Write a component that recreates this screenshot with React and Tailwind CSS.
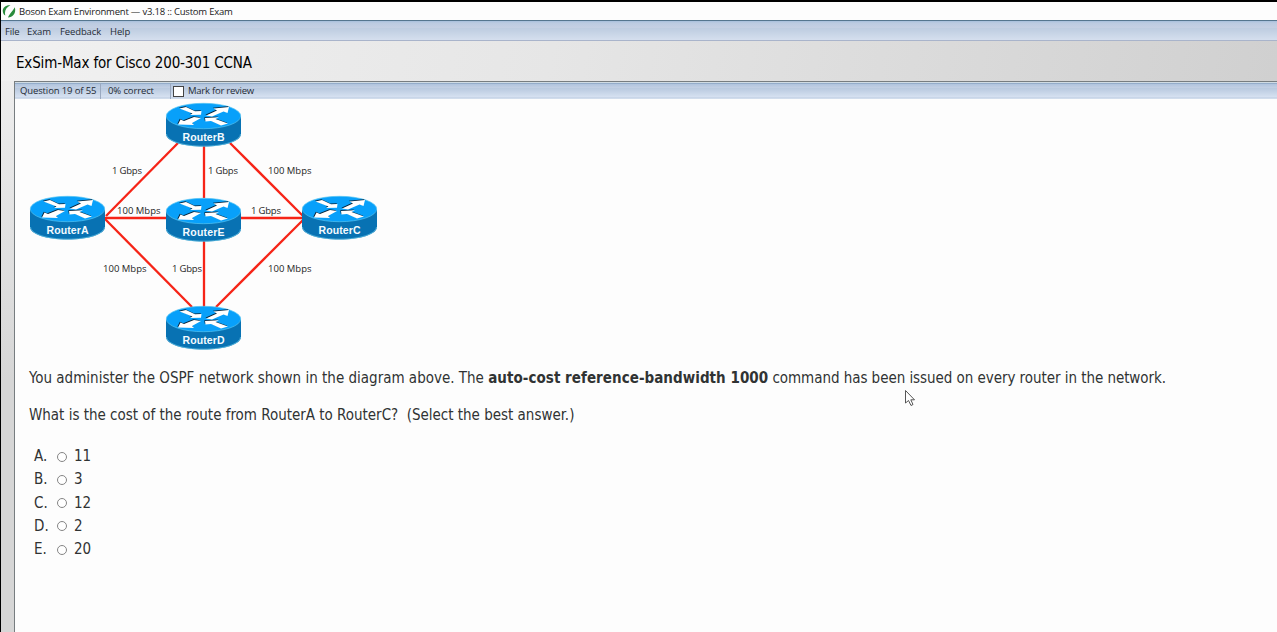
import React from "react";

const tahoma = "font-['DejaVu_Sans_Condensed','DejaVu_Sans',sans-serif] [font-stretch:condensed]";
const segoe = "font-['Open_Sans',sans-serif] [font-stretch:normal]";

const routers = [
  { name: "RouterB", x: 166, y: 103 },
  { name: "RouterA", x: 30, y: 196 },
  { name: "RouterE", x: 166, y: 198 },
  { name: "RouterC", x: 302, y: 196 },
  { name: "RouterD", x: 166, y: 306 },
];

const links = [
  [106, 216, 178, 143],
  [204, 146, 204, 198],
  [230, 143, 303, 216],
  [104, 218, 167, 218],
  [240, 218, 303, 218],
  [105, 219, 192, 307],
  [204, 240, 204, 307],
  [303, 220, 216, 307],
];

const speeds = [
  [112, 173.5, "1 Gbps", 30],
  [208, 173.5, "1 Gbps", 30],
  [268, 173.5, "100 Mbps", 43.5],
  [117, 214, "100 Mbps", 43.5],
  [251, 214, "1 Gbps", 30],
  [103, 271.5, "100 Mbps", 43.5],
  [172, 271.5, "1 Gbps", 30],
  [268, 271.5, "100 Mbps", 43.5],
];

function Arrows() {
  return (
    <>
      <path d="M13.5 5.5L20 4L29 8.2L35.5 8L35 11.8L24 12L26.5 10.5Z" />
      <path d="M40 12.5L51 7.5L47.5 5.5L63 4L61.5 10L57.5 8.5L46 13.5Z" />
      <path d="M35 15L26 20L28 22L12 21.5L14.5 16.5L18 18L28 14Z" />
      <path d="M39 15L53 14.2L49.5 16L62 20.5L55 22.5L45 18L39.5 18.5Z" />
    </>
  );
}

function Router({ name, x, y }) {
  return (
    <g transform={`translate(${x} ${y})`}>
      <path d="M0 13.5V31C0 38 16 43.5 37.5 43.5S75 38 75 31V13.5Z" fill="#0872b3" />
      <path d="M.5 31C1 38 17 43.2 37.5 43.2S74 38 74.5 31" fill="none" stroke="#67c6e6" strokeWidth=".7" />
      <ellipse cx="37.5" cy="13" rx="37.2" ry="12.7" fill="#08a0fa" stroke="#55c4f2" strokeWidth=".7" />
      <g fill="#06243b" transform="translate(-.7 -.7)"><Arrows /></g>
      <g fill="#fff"><Arrows /></g>
      <text x="37.5" y="37.5" textAnchor="middle" textLength="42" fill="#f4fbff" className="font-['Liberation_Sans',sans-serif] text-[10.5px] font-bold [font-stretch:normal]">{name}</text>
    </g>
  );
}

function Diagram() {
  return (
    <svg className="block h-[254px] w-[363px] shrink-0" viewBox="15 99 363 254" role="img" aria-label="OSPF network">
      <g stroke="#f62417" strokeWidth="2.3">
        {links.map(([x1, y1, x2, y2], i) => <line key={i} x1={x1} y1={y1} x2={x2} y2={y2} />)}
      </g>
      {routers.map((r) => <Router key={r.name} {...r} />)}
      {speeds.map(([x, y, t, w], i) => (
        <text key={i} x={x} y={y} textLength={w} fill="#252525" className="font-['Open_Sans',sans-serif] text-[9.5px] [font-stretch:normal]">{t}</text>
      ))}
    </svg>
  );
}

const answers = [["A.", "11"], ["B.", "3"], ["C.", "12"], ["D.", "2"], ["E.", "20"]];

export default function App() {
  return (
    <div className={`flex h-[632px] w-[1277px] flex-col overflow-hidden border-l border-t-2 border-black bg-[#fdfdfd] ${tahoma}`}>
      <header className={`flex h-[18px] shrink-0 items-center text-[9.5px] text-[#202020] ${segoe}`}>
        <svg className="ml-[1px] h-[14px] w-[14px]" viewBox="0 0 14 14">
          <path d="M8.5 1.2C3 .7-.2 4.5 1 8.5C1.4 10 2.3 11 3.3 11.5C2.2 7 4 3.5 8.5 1.2Z" fill="#298b3c" />
          <path d="M12.8 3.2C14.2 8 12 12.8 6 13.5C7 10.5 10 8 12.8 3.2Z" fill="#298b3c" />
        </svg>
        <span className="ml-[3px] whitespace-pre pt-[2px] tracking-[-0.21px]">Boson Exam Environment — v3.18 :: Custom Exam</span>
      </header>
      <nav className={`flex h-[21px] shrink-0 items-center border-b border-t border-b-[#a9b4cb] border-t-[#55768f] bg-[linear-gradient(#a7bfdc_0px,#bccbe1_2px,#c5d0e3_7px,#bdcce0_7px,#d5dfee_19px)] pt-[3px] text-[9.5px] tracking-[-0.12px] text-[#252b35] ${segoe}`}>
        <span className="ml-1 w-[22px]">File</span><span className="w-[33px]">Exam</span><span className="w-[50px]">Feedback</span><span>Help</span>
      </nav>
      <div className="flex min-h-0 grow flex-col bg-[linear-gradient(100deg,#f1f1f1_0%,#e6e6e6_40%,#cdcdcd_100%)]">
        <div className="flex h-[40px] shrink-0 items-center pl-[15px] pt-[4px]">
          <h1 className="whitespace-nowrap text-[15px] tracking-[-0.16px] text-black">ExSim-Max for Cisco 200-301 CCNA</h1>
        </div>
        <div className="flex min-h-0 grow">
          <div className="w-[13px] shrink-0 bg-[linear-gradient(#eeeeee,#d6d6d6_300px)]" />
          <main className="flex grow flex-col border-l border-t border-[#777d80] bg-[#fdfdfd]">
            <div className={`flex h-[17px] shrink-0 items-center border-t border-[#d0dce4] bg-[linear-gradient(#7794b5_0px,#b0c4de_1px,#c3d0e4_5px,#b8c9df_5px,#d6e1f1_14px,#bccbe0_15px,#e6eef8_16px)] text-[9.5px] tracking-[-0.12px] text-[#252b35] ${segoe}`}>
              <span className="h-full w-[86px] whitespace-nowrap border-r border-[#9aa9c0] pl-[5px] leading-[15px]">Question 19 of 55</span>
              <span className="h-full w-[70px] border-r border-[#9aa9c0] pl-[7px] leading-[15px]">0% correct</span>
              <span className="ml-[2px] h-[11px] w-[11px] border border-[#444] bg-white" />
              <span className="ml-1 pt-px tracking-[-0.24px]">Mark for review</span>
            </div>
            <Diagram />
            <section className="flex flex-col pl-[14px] text-[15px] text-[#303333]">
              <p className="mt-[15px] h-[20px] whitespace-pre leading-[20px]">You administer the OSPF network shown in the diagram above. The <b className="tracking-[0.04px]">auto-cost reference-bandwidth 1000</b><span className="tracking-[-0.05px]"> command has been issued on every router in the network.</span></p>
              <div className="relative mt-[17px] h-[20px]">
                <p className="whitespace-pre leading-[20px] tracking-[-0.015px]">What is the cost of the route from RouterA to RouterC?  (Select the best answer.)</p>
                <svg className="absolute -top-[15px] left-[876px] h-[17px] w-[11px]" viewBox="0 0 11 17"><path d="M.5 .5V13L3.5 10.5L6 15.5L8 14.5L5.8 9.8H9.5Z" fill="#fff" stroke="#444" strokeWidth=".9" /></svg>
              </div>
              <div className="mt-[20px] flex flex-col pl-[5px]">
                {answers.map(([letter, value]) => (
                  <label key={letter} className="flex h-[23.15px] items-center">
                    <span className="w-[23px]">{letter}</span>
                    <span className="mt-[1px] h-[10px] w-[10px] rounded-full border border-[#858585] bg-white" />
                    <span className="ml-[7px]">{value}</span>
                  </label>
                ))}
              </div>
            </section>
          </main>
        </div>
      </div>
    </div>
  );
}
